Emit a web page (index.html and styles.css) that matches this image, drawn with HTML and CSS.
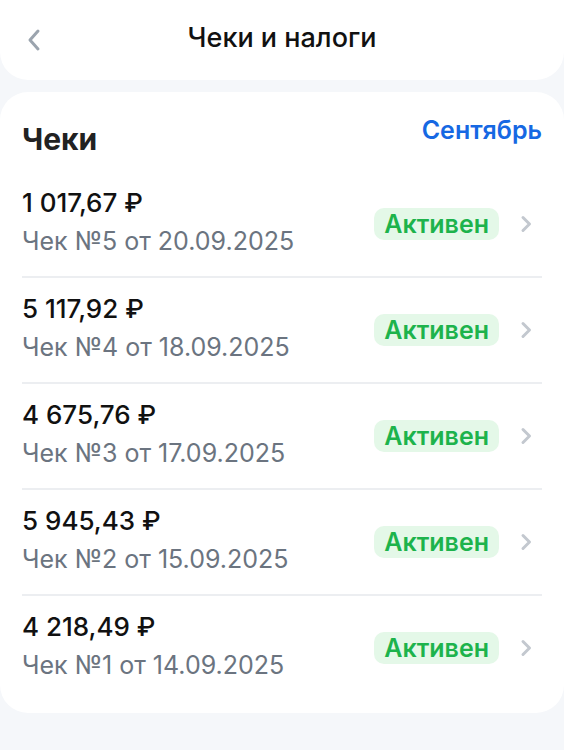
FILE: index.html
```html
<!DOCTYPE html>
<html lang="ru">
<head>
    <meta charset="UTF-8">
    <meta name="viewport" content="width=device-width, initial-scale=1.0">
    <title>Чеки и налоги</title>
    <link rel="stylesheet" href="styles.css">
</head>
<body>
    <header class="topbar">
        <button class="back" aria-label="Назад">
            <svg width="16" height="24" viewBox="0 0 16 24"><path d="M12 3 L4 12 L12 21" fill="none" stroke="#9ba4ae" stroke-width="3" stroke-linecap="round" stroke-linejoin="round"/></svg>
        </button>
        <h1 class="topbar-title">Чеки и налоги</h1>
    </header>

    <section class="card">
        <div class="card-head">
            <h2 class="card-title">Чеки</h2>
            <a class="month" href="#">Сентябрь</a>
        </div>

        <ul class="receipts">
            <li class="receipt">
                <div class="receipt-info">
                    <div class="amount">1 017,67 ₽</div>
                    <div class="meta">Чек №5 от 20.09.2025</div>
                </div>
                <span class="badge">Активен</span>
                <svg class="chevron" width="14" height="18" viewBox="0 0 14 18"><path d="M4 2.5 L10.5 9 L4 15.5" fill="none" stroke="#c3c8cf" stroke-width="3" stroke-linecap="round" stroke-linejoin="round"/></svg>
            </li>
            <li class="receipt">
                <div class="receipt-info">
                    <div class="amount">5 117,92 ₽</div>
                    <div class="meta">Чек №4 от 18.09.2025</div>
                </div>
                <span class="badge">Активен</span>
                <svg class="chevron" width="14" height="18" viewBox="0 0 14 18"><path d="M4 2.5 L10.5 9 L4 15.5" fill="none" stroke="#c3c8cf" stroke-width="3" stroke-linecap="round" stroke-linejoin="round"/></svg>
            </li>
            <li class="receipt">
                <div class="receipt-info">
                    <div class="amount">4 675,76 ₽</div>
                    <div class="meta">Чек №3 от 17.09.2025</div>
                </div>
                <span class="badge">Активен</span>
                <svg class="chevron" width="14" height="18" viewBox="0 0 14 18"><path d="M4 2.5 L10.5 9 L4 15.5" fill="none" stroke="#c3c8cf" stroke-width="3" stroke-linecap="round" stroke-linejoin="round"/></svg>
            </li>
            <li class="receipt">
                <div class="receipt-info">
                    <div class="amount">5 945,43 ₽</div>
                    <div class="meta">Чек №2 от 15.09.2025</div>
                </div>
                <span class="badge">Активен</span>
                <svg class="chevron" width="14" height="18" viewBox="0 0 14 18"><path d="M4 2.5 L10.5 9 L4 15.5" fill="none" stroke="#c3c8cf" stroke-width="3" stroke-linecap="round" stroke-linejoin="round"/></svg>
            </li>
            <li class="receipt">
                <div class="receipt-info">
                    <div class="amount">4 218,49 ₽</div>
                    <div class="meta">Чек №1 от 14.09.2025</div>
                </div>
                <span class="badge">Активен</span>
                <svg class="chevron" width="14" height="18" viewBox="0 0 14 18"><path d="M4 2.5 L10.5 9 L4 15.5" fill="none" stroke="#c3c8cf" stroke-width="3" stroke-linecap="round" stroke-linejoin="round"/></svg>
            </li>
        </ul>
    </section>
</body>
</html>
```

FILE: styles.css
```css
body {
    margin: 0;
    background: #f5f7fa;
    font-family: Inter, "Noto Sans", sans-serif;
    color: #111;
}
.topbar {
    position: relative;
    display: flex;
    align-items: center;
    justify-content: center;
    height: 80px;
    background: #fff;
    border-radius: 0 0 28px 28px;
}
.back {
    position: absolute;
    left: 26px;
    top: 28px;
    padding: 0;
    border: 0;
    background: none;
    cursor: pointer;
}
.topbar-title {
    margin: 0 0 4px;
    font-size: 27px;
    font-weight: 500;
    line-height: 32px;
}
.card {
    margin-top: 12px;
    padding: 0 22px 13px;
    background: #fff;
    border-radius: 28px;
}
.card-head {
    display: flex;
    justify-content: space-between;
    align-items: flex-start;
    padding-top: 24px;
    margin-bottom: 15px;
}
.card-title {
    margin: 5px 0 0;
    color: #222;
    font-size: 30px;
    font-weight: 700;
    line-height: 36px;
}
.month {
    color: #1668e3;
    font-size: 25px;
    font-weight: 600;
    text-decoration: none;
    line-height: 28px;
}
.receipts {
    list-style: none;
    margin: 0;
    padding: 0;
}
.receipt {
    display: flex;
    align-items: center;
    padding: 15px 0 20px;
    border-bottom: 2px solid #eceef1;
}
.receipt:last-child {
    border-bottom: 0;
}
.receipt-info {
    flex: 1;
}
.amount {
    font-size: 26px;
    font-weight: 500;
    line-height: 32px;
}
.meta {
    margin-top: 7px;
    color: #6b7480;
    font-size: 25px;
    line-height: 30px;
}
.badge {
    margin-top: 4px;
    padding: 2px 10px;
    border-radius: 10px;
    background: #e4f8e8;
    color: #1db34c;
    font-size: 25px;
    font-weight: 600;
    line-height: 28px;
}
.chevron {
    margin: 4px 9px 0 20px;
}
```
